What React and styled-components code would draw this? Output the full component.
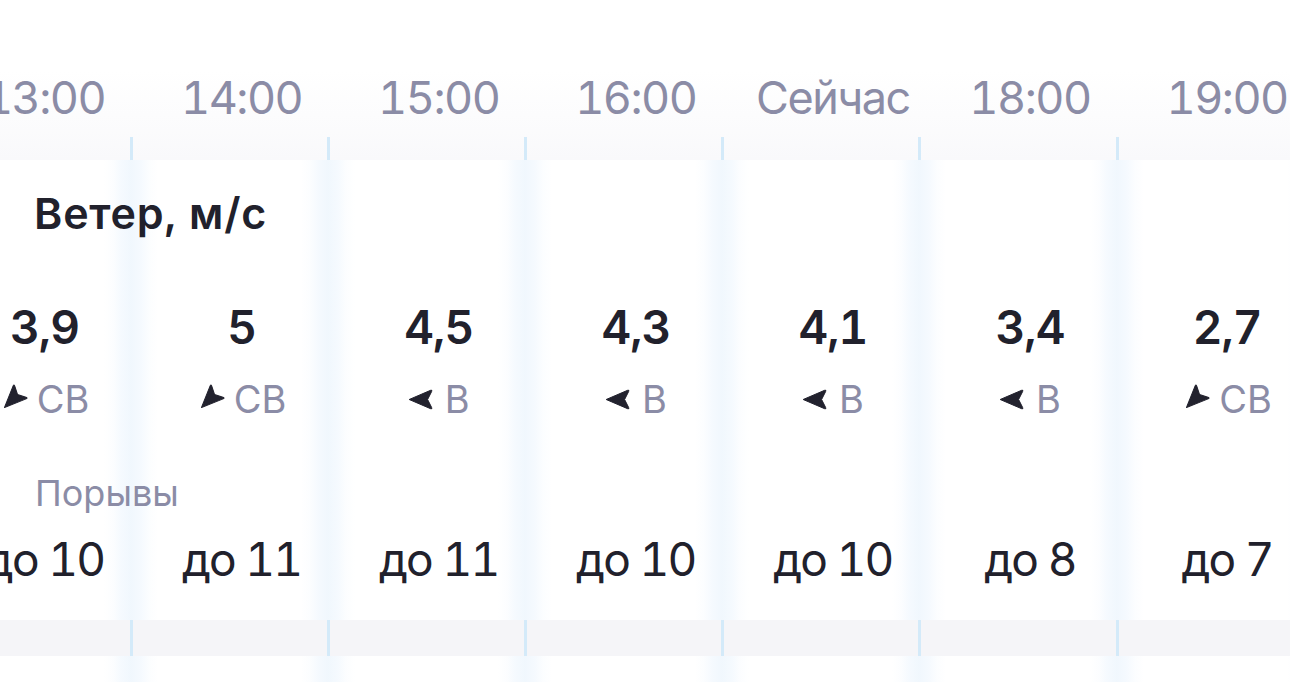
import React from 'react';
import styled, { createGlobalStyle } from 'styled-components';

const COL = 197.1;

const Global = createGlobalStyle`
  html, body { margin: 0; padding: 0; background: #fff; }
  body {
    font-family: Inter, "Noto Sans", sans-serif;
    font-feature-settings: "tnum" 1;
    overflow: hidden;
    -webkit-font-smoothing: antialiased;
  }
`;

const Page = styled.div`
  width: 1290px;
  height: 682px;
  overflow: hidden;
  background: #fff;
`;

const Track = styled.div`
  margin-left: -66px;
  width: ${7 * COL}px;
`;

const Grid = styled.div`
  display: grid;
  grid-template-columns: repeat(7, ${COL}px);
`;

const Header = styled(Grid)`
  grid-template-rows: 137px 23px;
  background: linear-gradient(180deg, #ffffff 0px, #ffffff 70px, #f9f9fb 160px);
`;

const TimeLabel = styled.div`
  grid-row: 1;
  padding: 75px 0 0 24px;
  text-align: center;
  font-size: 45px;
  line-height: 1;
  letter-spacing: -1.5px;
  color: #8b8ca6;
  white-space: nowrap;
`;

const Tick = styled.div`
  grid-row: ${(p) => p.$row || 1};
  grid-column: ${(p) => p.$col};
  width: 3px;
  margin-left: -1px;
  align-self: stretch;
  background: #d4eaf9;
`;

const Body = styled(Grid)`
  grid-template-rows: ${(p) => p.$rows};
  align-items: end;
`;

const ColumnBg = styled.div`
  grid-row: 1 / -1;
  grid-column: ${(p) => p.$col};
  align-self: stretch;
  background: linear-gradient(
    90deg,
    rgba(238, 246, 253, 0.85) 0px,
    rgba(240, 247, 254, 0.65) 10px,
    rgba(244, 249, 254, 0.3) 18px,
    rgba(255, 255, 255, 0) 27px,
    rgba(255, 255, 255, 0) calc(100% - 27px),
    rgba(244, 249, 254, 0.3) calc(100% - 18px),
    rgba(240, 247, 254, 0.65) calc(100% - 10px),
    rgba(238, 246, 253, 0.85) 100%
  );
`;

const SectionTitle = styled.div`
  grid-row: 1;
  grid-column: 1 / span 3;
  padding-left: 100px;
  font-size: 43px;
  line-height: 1;
  font-weight: 600;
  letter-spacing: 0.8px;
  color: #21212c;
  white-space: nowrap;
`;

const Value = styled.div`
  grid-row: 2;
  grid-column: ${(p) => p.$col};
  padding-left: 24px;
  text-align: center;
  font-size: 46px;
  line-height: 1;
  font-weight: 600;
  letter-spacing: -1px;
  color: #21212c;
`;

const Direction = styled.div`
  grid-row: 3;
  grid-column: ${(p) => p.$col};
  padding-left: 24px;
  display: flex;
  justify-content: center;
  align-items: center;
  gap: 12px;
  height: 38px;
  font-size: 38px;
  line-height: 1;
  color: #8b8ca6;
`;

const Arrow = styled.svg`
  width: 25px;
  height: 21px;
  flex: none;
  transform: rotate(${(p) => p.$angle}deg);
`;

const SubLabel = styled.div`
  grid-row: 4;
  grid-column: 1 / span 3;
  padding-left: 101px;
  font-size: 36px;
  line-height: 1;
  color: #8b8ca6;
  white-space: nowrap;
`;

const Gust = styled.div`
  grid-row: 5;
  grid-column: ${(p) => p.$col};
  padding-left: 24px;
  text-align: center;
  font-size: 46px;
  line-height: 1;
  letter-spacing: -1.8px;
  color: #21212c;
  white-space: nowrap;
`;

const Strip = styled(Grid)`
  height: 36px;
  background: #f5f5f8;
`;

const Footer = styled(Grid)`
  height: 26px;
`;

const hours = [
  { t: '13:00', v: '3,9', d: 'СВ', g: 'до 10' },
  { t: '14:00', v: '5', d: 'СВ', g: 'до 11' },
  { t: '15:00', v: '4,5', d: 'В', g: 'до 11' },
  { t: '16:00', v: '4,3', d: 'В', g: 'до 10' },
  { t: 'Сейчас', v: '4,1', d: 'В', g: 'до 10' },
  { t: '18:00', v: '3,4', d: 'В', g: 'до 8' },
  { t: '19:00', v: '2,7', d: 'СВ', g: 'до 7' },
];

const angleFor = (d) => (d === 'СВ' ? -45 : 0);

function WindArrow({ angle }) {
  return (
    <Arrow viewBox="0 0 25 21" $angle={angle}>
      <path
        d="M1.2 10.5 L22.6 1.3 Q24.6 0.6 23.6 2.6 L19.6 10.5 L23.6 18.4 Q24.6 20.4 22.6 19.7 Z"
        fill="#22222e"
        stroke="#22222e"
        strokeWidth="1"
        strokeLinejoin="round"
      />
    </Arrow>
  );
}

export default function App() {
  return (
    <Page>
      <Global />
      <Track>
        <Header>
          {hours.map((h, i) => (
            <TimeLabel key={'t' + i}>{h.t}</TimeLabel>
          ))}
          {hours.map((h, i) => (
            <Tick key={'k' + i} $row={2} $col={i + 1} />
          ))}
        </Header>

        <Body $rows="75px 115px 68px 93px 71px 38px">
          {hours.map((h, i) => (
            <ColumnBg key={'b' + i} $col={i + 1} />
          ))}
          <SectionTitle>Ветер, м/с</SectionTitle>
          {hours.map((h, i) => (
            <Value key={'v' + i} $col={i + 1}>
              {h.v}
            </Value>
          ))}
          {hours.map((h, i) => (
            <Direction key={'d' + i} $col={i + 1}>
              <WindArrow angle={angleFor(h.d)} />
              <span>{h.d}</span>
            </Direction>
          ))}
          <SubLabel>Порывы</SubLabel>
          {hours.map((h, i) => (
            <Gust key={'g' + i} $col={i + 1}>
              {h.g}
            </Gust>
          ))}
        </Body>

        <Strip>
          {hours.map((h, i) => (
            <Tick key={'s' + i} $col={i + 1} />
          ))}
        </Strip>

        <Footer>
          {hours.map((h, i) => (
            <ColumnBg key={'f' + i} $col={i + 1} />
          ))}
        </Footer>
      </Track>
    </Page>
  );
}
